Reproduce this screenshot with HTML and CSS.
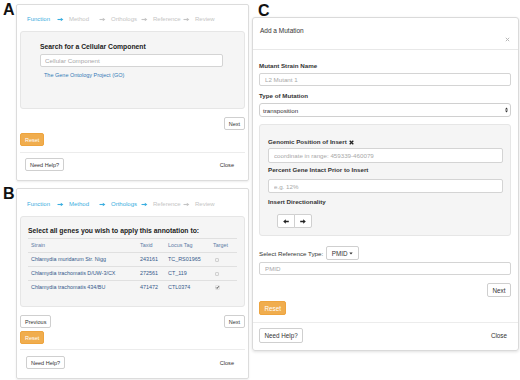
FILE: index.html
```html
<!DOCTYPE html>
<html>
<head>
<meta charset="utf-8">
<link rel="stylesheet" href="styles.css">
</head>
<body>
<div class="page">
  <div class="col-left">
    <div class="panel-row row-a">
      <div class="plabel">A</div>
      <div class="box">
        <div class="steps steps-a">
          <span class="step on">Function<svg class="sarrow" width="7" height="5" viewBox="0 0 7 5"><path d="M0.5 2.5H4.5" stroke="currentColor" stroke-width="1.1"/><path d="M3.8 0.8L6.4 2.5L3.8 4.2Z" fill="currentColor"/></svg></span>
          <span class="step">Method<svg class="sarrow" width="7" height="5" viewBox="0 0 7 5"><path d="M0.5 2.5H4.5" stroke="currentColor" stroke-width="1.1"/><path d="M3.8 0.8L6.4 2.5L3.8 4.2Z" fill="currentColor"/></svg></span>
          <span class="step">Orthologs<svg class="sarrow" width="7" height="5" viewBox="0 0 7 5"><path d="M0.5 2.5H4.5" stroke="currentColor" stroke-width="1.1"/><path d="M3.8 0.8L6.4 2.5L3.8 4.2Z" fill="currentColor"/></svg></span>
          <span class="step">Reference<svg class="sarrow" width="7" height="5" viewBox="0 0 7 5"><path d="M0.5 2.5H4.5" stroke="currentColor" stroke-width="1.1"/><path d="M3.8 0.8L6.4 2.5L3.8 4.2Z" fill="currentColor"/></svg></span>
          <span class="step">Review</span>
        </div>
        <div class="well well-a">
          <div class="well-title">Search for a Cellular Component</div>
          <input class="inp inp-a" type="text" placeholder="Cellular Component">
          <div class="go-link">The Gene Ontology Project (GO)</div>
        </div>
        <div class="btn-row row-end next-a"><span class="btn">Next</span></div>
        <div class="btn-row reset-row"><span class="btn btn-warn">Reset</span></div>
        <div class="foot foot-a"><span class="btn">Need Help?</span><span class="close-link">Close</span></div>
      </div>
    </div>

    <div class="panel-row row-b">
      <div class="plabel">B</div>
      <div class="box">
        <div class="steps steps-b">
          <span class="step on">Function<svg class="sarrow" width="7" height="5" viewBox="0 0 7 5"><path d="M0.5 2.5H4.5" stroke="currentColor" stroke-width="1.1"/><path d="M3.8 0.8L6.4 2.5L3.8 4.2Z" fill="currentColor"/></svg></span>
          <span class="step on">Method<svg class="sarrow" width="7" height="5" viewBox="0 0 7 5"><path d="M0.5 2.5H4.5" stroke="currentColor" stroke-width="1.1"/><path d="M3.8 0.8L6.4 2.5L3.8 4.2Z" fill="currentColor"/></svg></span>
          <span class="step on">Orthologs<svg class="sarrow" width="7" height="5" viewBox="0 0 7 5"><path d="M0.5 2.5H4.5" stroke="currentColor" stroke-width="1.1"/><path d="M3.8 0.8L6.4 2.5L3.8 4.2Z" fill="currentColor"/></svg></span>
          <span class="step">Reference<svg class="sarrow" width="7" height="5" viewBox="0 0 7 5"><path d="M0.5 2.5H4.5" stroke="currentColor" stroke-width="1.1"/><path d="M3.8 0.8L6.4 2.5L3.8 4.2Z" fill="currentColor"/></svg></span>
          <span class="step">Review</span>
        </div>
        <div class="well well-b">
          <div class="well-title">Select all genes you wish to apply this annotation to:</div>
          <table class="genes">
            <colgroup><col class="c1"><col class="c2"><col class="c3"><col class="c4"></colgroup>
            <tr class="hdr"><td>Strain</td><td>Taxid</td><td>Locus Tag</td><td>Target</td></tr>
            <tr><td>Chlamydia muridarum Str. Nigg</td><td>243161</td><td>TC_RS01965</td><td><span class="cb"></span></td></tr>
            <tr><td>Chlamydia trachomatis D/UW-3/CX</td><td>272561</td><td>CT_119</td><td><span class="cb"></span></td></tr>
            <tr><td>Chlamydia trachomatis 434/BU</td><td>471472</td><td>CTL0374</td><td><svg class="cbk" width="5" height="5" viewBox="0 0 5 5"><rect x="0.5" y="0.5" width="4" height="4" rx="0.6" fill="#f2f2f2" stroke="#d0d0d0" stroke-width="0.5"/><path d="M1.3 2.6L2.1 3.4L3.8 1.3" fill="none" stroke="#333" stroke-width="0.9"/></svg></td></tr>
          </table>
        </div>
        <div class="btn-row row-between prev-row"><span class="btn">Previous</span><span class="btn">Next</span></div>
        <div class="btn-row reset-row"><span class="btn btn-warn">Reset</span></div>
        <div class="foot foot-b"><span class="btn">Need Help?</span><span class="close-link">Close</span></div>
      </div>
    </div>
  </div>

  <div class="col-right">
    <div class="plabel plabel-c">C</div>
    <div class="cbox">
      <div class="c-head">
        <span class="c-title">Add a Mutation</span>
        <svg class="c-x" width="5" height="5" viewBox="0 0 5 5"><path d="M0.8 0.8L4.2 4.2M4.2 0.8L0.8 4.2" stroke="#b8b8b8" stroke-width="1"/></svg>
      </div>
      <div class="c-body">
        <div class="c-label">Mutant Strain Name</div>
        <input class="inp c-inp m3" type="text" placeholder="L2 Mutant 1">
        <div class="c-label m6">Type of Mutation</div>
        <div class="c-select">
          <span>transposition</span>
          <svg width="3" height="6" viewBox="0 0 3 6"><path d="M0 2.4L1.5 0.4L3 2.4Z M0 3.6L1.5 5.6L3 3.6Z" fill="#333"/></svg>
        </div>
        <div class="well well-c">
          <div class="c-label">Genomic Position of Insert <svg class="xmark" width="5" height="5" viewBox="0 0 5 5"><path d="M0.7 0.7L4.3 4.3M4.3 0.7L0.7 4.3" stroke="#222" stroke-width="1.3"/></svg></div>
          <input class="inp c-inp2 m2" type="text" placeholder="coordinate in range: 459339-460079">
          <div class="c-label m3">Percent Gene Intact Prior to Insert</div>
          <input class="inp c-inp3 m5" type="text" placeholder="e.g. 12%">
          <div class="c-label m5">Insert Directionality</div>
          <div class="dir-group">
            <span class="dir-btn"><svg width="6" height="5" viewBox="0 0 6 5"><path d="M0.2 2.5L2.8 0.2V1.7H5.8V3.3H2.8V4.8Z" fill="#222"/></svg></span>
            <span class="dir-btn dir-r"><svg width="6" height="5" viewBox="0 0 6 5"><path d="M5.8 2.5L3.2 0.2V1.7H0.2V3.3H3.2V4.8Z" fill="#222"/></svg></span>
          </div>
        </div>
        <div class="ref-row">
          <span class="ref-label">Select Reference Type:</span>
          <span class="btn cbtn pmid-btn">PMID<svg class="caret" width="4" height="3" viewBox="0 0 4 3"><path d="M0.3 0.6H3.7L2 2.5Z" fill="#333"/></svg></span>
        </div>
        <input class="inp c-inp m2" type="text" placeholder="PMID">
        <div class="btn-row row-end c-next"><span class="btn cbtn">Next</span></div>
        <div class="btn-row c-reset"><span class="btn cbtn btn-warn">Reset</span></div>
      </div>
      <div class="c-foot"><span class="btn cbtn help-c">Need Help?</span><span class="close-link close-c">Close</span></div>
    </div>
  </div>
</div>
</body>
</html>
```
FILE: styles.css
```css
html, body {
  margin: 0;
  padding: 0;
}
body {
  width: 520px;
  height: 380px;
  overflow: hidden;
  background: #fff;
  font-family: "Liberation Sans", Arial, sans-serif;
  color: #333;
}
.page {
  display: flex;
  align-items: flex-start;
}
.col-left {
  width: 250px;
}
.col-right {
  width: 270px;
  padding-top: 4px;
}
.panel-row {
  display: flex;
  align-items: flex-start;
}
.row-a { margin-top: 4px; }
.row-b { margin-top: 7px; }
.plabel {
  width: 16px;
  box-sizing: border-box;
  padding-left: 3px;
  font-size: 16px;
  font-weight: bold;
  line-height: 13px;
  margin-top: -1px;
  color: #111;
}
.plabel-c {
  width: auto;
  padding-left: 8px;
  margin-top: 0;
  height: 13px;
}
.box {
  width: 233px;
  box-sizing: border-box;
  border: 1px solid #dcdcdc;
  border-radius: 2px;
  box-shadow: 0 1px 2px rgba(0,0,0,0.08);
  padding: 0 3px 9px;
}
.steps {
  display: flex;
  padding-left: 7px;
  height: 8px;
  line-height: 8px;
  font-size: 6px;
  margin-bottom: 8px;
  color: #c4c4c4;
}
.steps-a { margin-top: 10px; }
.steps-b { margin-top: 11px; }
.step {
  width: 42px;
  display: flex;
  align-items: center;
  flex-shrink: 0;
}
.step .sarrow {
  margin-left: auto;
  margin-right: 5px;
  margin-top: 1px;
}
.step.on { color: #3aaee0; }
.well {
  box-sizing: border-box;
  background: #f5f5f5;
  border: 1px solid #e6e6e6;
  border-radius: 3px;
}
.well-a {
  height: 78px;
  padding: 10px 21px 0 19px;
}
.well-b {
  height: 91px;
  padding: 9px 7px 0 7px;
}
.well-title {
  font-size: 6.8px;
  font-weight: bold;
  line-height: 10px;
  color: #222;
  white-space: nowrap;
}
.inp {
  display: block;
  box-sizing: border-box;
  width: 100%;
  margin: 0;
  border: 1px solid #d4d4d4;
  border-radius: 2px;
  background: #fff;
  font-family: "Liberation Sans", Arial, sans-serif;
  color: #333;
  outline: none;
}
.inp::placeholder { color: #a8a8a8; }
.inp-a {
  height: 13px;
  margin-top: 2px;
  padding: 0 4px;
  font-size: 6.2px;
}
.go-link {
  margin-top: 4px;
  line-height: 8px;
  font-size: 5.5px;
  padding-left: 4px;
  color: #337ab7;
}
.btn-row {
  display: flex;
}
.row-end { justify-content: flex-end; }
.row-between { justify-content: space-between; }
.next-a { margin-top: 8px; }
.prev-row { margin-top: 8px; }
.reset-row { margin-top: 3px; }
.btn {
  display: inline-flex;
  align-items: center;
  justify-content: center;
  box-sizing: border-box;
  height: 13px;
  padding: 0 4px;
  border: 1px solid #cfcfcf;
  border-radius: 2px;
  background: #fff;
  font-size: 5.5px;
  color: #333;
  white-space: nowrap;
}
.btn-warn {
  background: #f0ad4e;
  border-color: #eea43e;
  color: #fff;
}
.foot {
  display: flex;
  justify-content: space-between;
  align-items: center;
  border-top: 1px solid #ececec;
}
.foot-a {
  margin-top: 6px;
  padding: 5px 11px 0 5px;
}
.foot-b {
  margin-top: 5px;
  padding: 6px 11px 0 6px;
}
.close-link {
  font-size: 5.6px;
  color: #333;
}
.genes {
  width: 100%;
  margin-top: 2px;
  border-collapse: collapse;
  table-layout: fixed;
  font-size: 5.4px;
  color: #34588a;
}
.genes .c1 { width: 109px; }
.genes .c2 { width: 28px; }
.genes .c3 { width: 45px; }
.genes .c4 { width: 27px; }
.genes td {
  border-top: 1px solid #e0e0e0;
  height: 13px;
  padding: 0 0 0 3px;
  white-space: nowrap;
  overflow: hidden;
  line-height: 13px;
}
.genes .hdr td { color: #5c7ba6; }
.cb {
  display: inline-block;
  box-sizing: border-box;
  width: 4px;
  height: 4px;
  margin-left: 2px;
  border: 0.5px solid #d0d0d0;
  border-radius: 1px;
  background: #f2f2f2;
  vertical-align: middle;
}
.cbk {
  margin-left: 1.5px;
  vertical-align: middle;
}
/* Panel C */
.cbox {
  margin-left: 2px;
  width: 267px;
  box-sizing: border-box;
  border: 1px solid #dadada;
  border-radius: 3px;
  box-shadow: 0 1px 3px rgba(0,0,0,0.12);
}
.c-head {
  height: 32px;
  box-sizing: border-box;
  border-bottom: 1px solid #e8e8e8;
  padding: 8px 8px 0 7px;
  display: flex;
  justify-content: space-between;
  align-items: flex-start;
}
.c-title {
  font-size: 6.5px;
  line-height: 10px;
  color: #333;
}
.c-x {
  margin-top: 11px;
}
.c-body {
  padding: 12px 7px 7px 6px;
}
.c-label {
  font-size: 6.2px;
  font-weight: bold;
  line-height: 8px;
  color: #333;
  display: flex;
  align-items: center;
}
.xmark { margin-left: 2px; }
.m2 { margin-top: 2px; }
.m3 { margin-top: 3px; }
.m5 { margin-top: 5px; }
.m6 { margin-top: 6px; }
.c-inp {
  height: 13px;
  padding: 0 5px;
  font-size: 6.2px;
}
.c-inp2 {
  height: 15px;
  padding: 0 5px;
  font-size: 6.2px;
}
.c-inp3 {
  height: 14px;
  padding: 0 5px;
  font-size: 6.2px;
}
.c-select {
  margin-top: 3px;
  height: 14px;
  box-sizing: border-box;
  border: 1px solid #d0d0d0;
  border-radius: 3px;
  background: #fff;
  display: flex;
  justify-content: space-between;
  align-items: center;
  padding: 0 2px 0 3px;
  font-size: 6.2px;
  color: #333;
}
.well-c {
  margin-top: 7px;
  padding: 13px 7px 7px 8px;
}
.dir-group {
  margin-top: 8px;
  margin-left: 9px;
  display: flex;
}
.dir-btn {
  width: 18px;
  height: 14px;
  box-sizing: border-box;
  border: 1px solid #d0d0d0;
  border-radius: 2px 0 0 2px;
  background: #fff;
  display: flex;
  align-items: center;
  justify-content: center;
}
.dir-r {
  margin-left: -1px;
  border-radius: 0 2px 2px 0;
}
.ref-row {
  margin-top: 10px;
  height: 14px;
  display: flex;
  align-items: center;
  gap: 3px;
}
.ref-label {
  font-size: 6.2px;
  color: #333;
}
.cbtn {
  height: 14px;
  padding: 0 4.5px;
  font-size: 6.3px;
}
.pmid-btn { gap: 2px; }
.c-next { margin-top: 8px; }
.c-reset { margin-top: 4px; }
.c-foot {
  display: flex;
  justify-content: space-between;
  align-items: center;
  border-top: 1px solid #ececec;
  padding: 5px 11px 7px 6px;
}
.help-c { height: 15px; }
.close-c { font-size: 6.3px; }
```
